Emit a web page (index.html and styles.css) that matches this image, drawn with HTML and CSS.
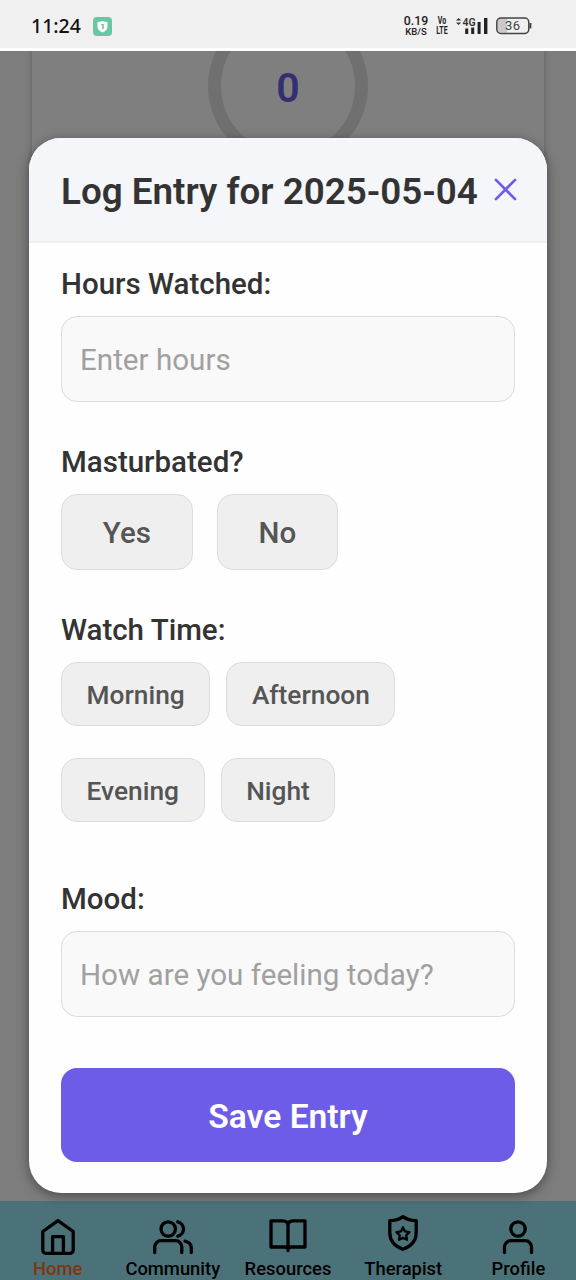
FILE: index.html
```
<!DOCTYPE html>
<html lang="en">
<head>
  <meta charset="UTF-8">
  <meta name="viewport" content="width=device-width, initial-scale=1.0">
  <title>Log Entry</title>
  <link rel="stylesheet" href="styles.css">
</head>
<body>
  <div class="phone">
    <header class="status-bar">
      <div class="status-left">
        <span class="clock">11:24</span>
        <svg class="shield-app" viewBox="0 0 19 19">
          <rect width="19" height="19" rx="4" fill="#68c7a5"/>
          <path d="M9.5 4 14.5 5.3V9.5c0 3-2.3 5-5 6-2.7-1-5-3-5-6V5.3z" fill="#fff"/>
          <path d="M8.2 7.1h2.6v4.8H9.2V8.3h-1z" fill="#68c7a5"/>
        </svg>
      </div>
      <div class="status-right">
        <div class="net-speed"><span class="speed">0.19</span><span class="unit">KB/S</span></div>
        <div class="volte"><span>Vo</span><span>LTE</span></div>
        <svg class="signal" viewBox="0 0 33 20">
          <path d="M0 4.5 2.6 2l2.6 2.5zM0 6.5h5.2L2.6 9z" fill="#333"/>
          <path d="M9.2 12.5h3V18h-3zM15.2 11.5h3V18h-3zM21.6 6h3v12h-3zM28 2h3.4v16H28z" fill="#222"/>
          <text x="6.6" y="9.6" class="signal-text">4G</text>
        </svg>
        <svg class="battery" viewBox="0 0 36 18">
          <path d="M5 1.5h6v14H5a3.5 3.5 0 0 1-3.5-3.5V5A3.5 3.5 0 0 1 5 1.5z" fill="#c9c9c9"/>
          <rect x=".8" y="1" width="32" height="15.4" rx="4.2" fill="none" stroke="#444" stroke-width="1.5"/>
          <path d="M34.4 6v5.4" stroke="#444" stroke-width="2"/>
          <text x="16.8" y="13.4" text-anchor="middle" class="battery-text">36</text>
        </svg>
      </div>
    </header>

    <main class="screen">
      <section class="stats-card">
        <div class="ring">0</div>
      </section>
    </main>

    <nav class="tab-bar">
      <a class="tab active">
        <svg viewBox="0 0 40 40"><path d="M4.8 14.5 20 3.6l15.2 10.9v18.8a3 3 0 0 1-3 3H7.8a3 3 0 0 1-3-3zM14.6 36V19.7h10.8V36"/></svg>
        <span>Home</span>
      </a>
      <a class="tab">
        <svg viewBox="0 0 40 40"><circle cx="15.2" cy="12" r="7.2"/><path d="M1.7 35.5V30a6.3 6.3 0 0 1 6.3-6.3h14.5a6.3 6.3 0 0 1 6.3 6.3v5.5M24.8 4.8a7.4 7.4 0 0 1 0 14.4M32 24.2c3.8.8 6.3 3.2 6.3 7v4.3"/></svg>
        <span>Community</span>
      </a>
      <a class="tab">
        <svg viewBox="0 0 40 40"><path d="M20 8.500c0-3-2-4.700-5-4.700H3V30h13.500c2.200 0 3.500.8 3.500 2.500 0-1.700 1.300-2.500 3.500-2.500H37V3.800H25c-3 0-5 1.700-5 4.700zM20 8.500v25"/></svg>
        <span>Resources</span>
      </a>
      <a class="tab">
        <svg viewBox="0 0 40 40"><path d="M20-.4c4 3 8.600 4 13.200 4v12.200c0 8-5 13.500-13.200 16.500-8.200-3-13.200-8.500-13.200-16.500V3.600c4.600 0 9.200-1 13.200-4z"/><path class="star" d="m20 10.300 2 4.100 4.500.7-3.300 3.200.8 4.500-4-2.100-4 2.100.8-4.500-3.300-3.200 4.500-.7z"/></svg>
        <span>Therapist</span>
      </a>
      <a class="tab">
        <svg viewBox="0 0 40 40"><circle cx="20" cy="12" r="7.2"/><path d="M6.500 35.500V30a6.300 6.300 0 0 1 6.300-6.300h14.400a6.300 6.300 0 0 1 6.300 6.300v5.500"/></svg>
        <span>Profile</span>
      </a>
    </nav>

    <div class="backdrop">
      <form class="modal">
        <div class="modal-header">
          <h1>Log Entry for 2025-05-04</h1>
          <button type="button" class="close" aria-label="Close">
            <svg viewBox="0 0 24 24"><path d="m2 2 20 20M22 2 2 22"/></svg>
          </button>
        </div>
        <div class="modal-body">
          <label for="hours">Hours Watched:</label>
          <input id="hours" type="text" placeholder="Enter hours">

          <label>Masturbated?</label>
          <div class="choices">
            <button type="button" class="choice">Yes</button>
            <button type="button" class="choice">No</button>
          </div>

          <label>Watch Time:</label>
          <div class="times">
            <button type="button" class="time">Morning</button>
            <button type="button" class="time">Afternoon</button>
            <button type="button" class="time">Evening</button>
            <button type="button" class="time">Night</button>
          </div>

          <label for="mood">Mood:</label>
          <input id="mood" type="text" placeholder="How are you feeling today?">

          <button type="button" class="save">Save Entry</button>
        </div>
      </form>
    </div>
  </div>
</body>
</html>
```
FILE: styles.css
```
* {
  box-sizing: border-box;
}
body {
  margin: 0;
  font-family: Roboto, "Liberation Sans", sans-serif;
}
button {
  margin: 0;
  font-family: inherit;
  white-space: nowrap;
}
.phone {
  position: relative;
  display: flex;
  flex-direction: column;
  width: 576px;
  height: 1280px;
  overflow: hidden;
  background: #fafafa;
}

/* status bar */
.status-bar {
  display: flex;
  justify-content: space-between;
  height: 51px;
  padding: 0 44px 0 31px;
  background: #f0f0f0;
  border-bottom: 3px solid #fdfdfd;
}
.status-left,
.status-right {
  display: flex;
  align-items: center;
  padding-top: 4px;
}
.status-left {
  gap: 12px;
}
.clock {
  font-family: "Noto Sans", sans-serif;
  font-size: 19.5px;
  font-weight: 500;
  line-height: 24px;
  color: #111;
}
.shield-app {
  width: 19px;
  height: 19px;
}
.net-speed,
.volte {
  display: flex;
  flex-direction: column;
  align-items: center;
  font-weight: 500;
  color: #222;
}
.net-speed {
  width: 24px;
}
.speed {
  font-size: 12.3px;
  line-height: 11px;
}
.unit {
  font-size: 9.5px;
  line-height: 9px;
}
.volte {
  width: 20px;
  margin: 0 4px;
  font-size: 10px;
  font-weight: 700;
  line-height: 10px;
  transform: scaleX(0.7);
}
.signal {
  width: 33px;
  height: 20px;
  margin-right: 7px;
}
.signal-text {
  font-size: 10.5px;
  font-weight: 600;
  fill: #333;
}
.battery {
  width: 36px;
  height: 18px;
}
.battery-text {
  font-size: 13px;
  letter-spacing: 0.5px;
  fill: #444;
}

/* page under the modal */
.screen {
  flex: 1;
  padding: 0 32px;
  overflow: hidden;
}
.stats-card {
  height: 100%;
  background: #fff;
  box-shadow: 0 2px 6px rgba(0, 0, 0, 0.25);
}
.ring {
  display: flex;
  align-items: center;
  justify-content: center;
  width: 160px;
  height: 160px;
  margin: -45px auto 0;
  padding-top: 3px;
  border: 13px solid #e0e0e0;
  border-radius: 50%;
  font-size: 41px;
  font-weight: 600;
  color: #6c5ce7;
}

/* bottom tabs */
.tab-bar {
  display: grid;
  grid-template-columns: repeat(5, 1fr);
  height: 79px;
  padding-top: 16px;
  background: #98e5f2;
}
.tab {
  display: flex;
  flex-direction: column;
  align-items: center;
  font-size: 18.4px;
  font-weight: 500;
  line-height: 22px;
  color: #000;
}
.tab svg {
  flex: none;
  width: 40px;
  height: 40px;
  margin-bottom: 1px;
  overflow: visible;
  fill: none;
  stroke: #000;
  stroke-width: 3.3;
  stroke-linecap: round;
  stroke-linejoin: round;
}
.tab .star {
  stroke-width: 2.3;
}
.tab.active {
  color: #ff6a1c;
}

/* modal */
.backdrop {
  position: absolute;
  inset: 51px 0 0;
  display: flex;
  align-items: flex-start;
  justify-content: center;
  padding-top: 87px;
  background: rgba(0, 0, 0, 0.5);
}
.modal {
  width: 518px;
  height: 1055px;
  overflow: hidden;
  background: #fefefe;
  border-radius: 32px;
  box-shadow: 0 3px 12px rgba(0, 0, 0, 0.4);
}
.modal-header {
  display: flex;
  align-items: center;
  justify-content: space-between;
  height: 105px;
  padding: 0 30px 0 32px;
  background: #f5f6fa;
  border-bottom: 2px solid #f0f0f0;
}
.modal-header h1 {
  margin: 5px 0 0;
  font-size: 36.8px;
  font-weight: 600;
  line-height: 44px;
  color: #333;
  white-space: nowrap;
}
.close {
  display: flex;
  padding: 0;
  background: none;
  border: none;
}
.close svg {
  width: 23px;
  height: 23px;
  fill: none;
  stroke: #6c5ce7;
  stroke-width: 2.8;
  stroke-linecap: round;
}
.modal-body {
  display: flex;
  flex-direction: column;
  padding: 24px 32px 32px;
}
label {
  margin-bottom: 15px;
  font-size: 29.5px;
  font-weight: 500;
  line-height: 34px;
  color: #333;
}
input {
  width: 100%;
  height: 86px;
  margin: 0 0 43.4px;
  padding: 2px 18px 0;
  font-family: inherit;
  font-size: 29.6px;
  color: #333;
  background: #f9f9f9;
  border: 1.5px solid #dcdcdc;
  border-radius: 16px;
}
input::placeholder {
  color: #a0a0a0;
}
.choices {
  display: flex;
  gap: 24px;
  margin-bottom: 43px;
}
.choice,
.time {
  font-weight: 500;
  color: #555;
  background: #efefef;
  border: 1.5px solid #dcdcdc;
  border-radius: 16px;
}
.choice {
  height: 76px;
  padding: 2px 40.8px 0;
  font-size: 29.5px;
}
.times {
  display: flex;
  flex-wrap: wrap;
  gap: 32px 16px;
  margin-bottom: 59.6px;
}
.time {
  height: 64px;
  padding: 2px 24.6px 0;
  font-size: 26.3px;
}
.save {
  height: 94px;
  margin-top: 7.6px;
  padding: 4px 0 0;
  font-size: 33.6px;
  font-weight: 600;
  color: #fff;
  background: #6c5ce7;
  border: none;
  border-radius: 16px;
}
```
